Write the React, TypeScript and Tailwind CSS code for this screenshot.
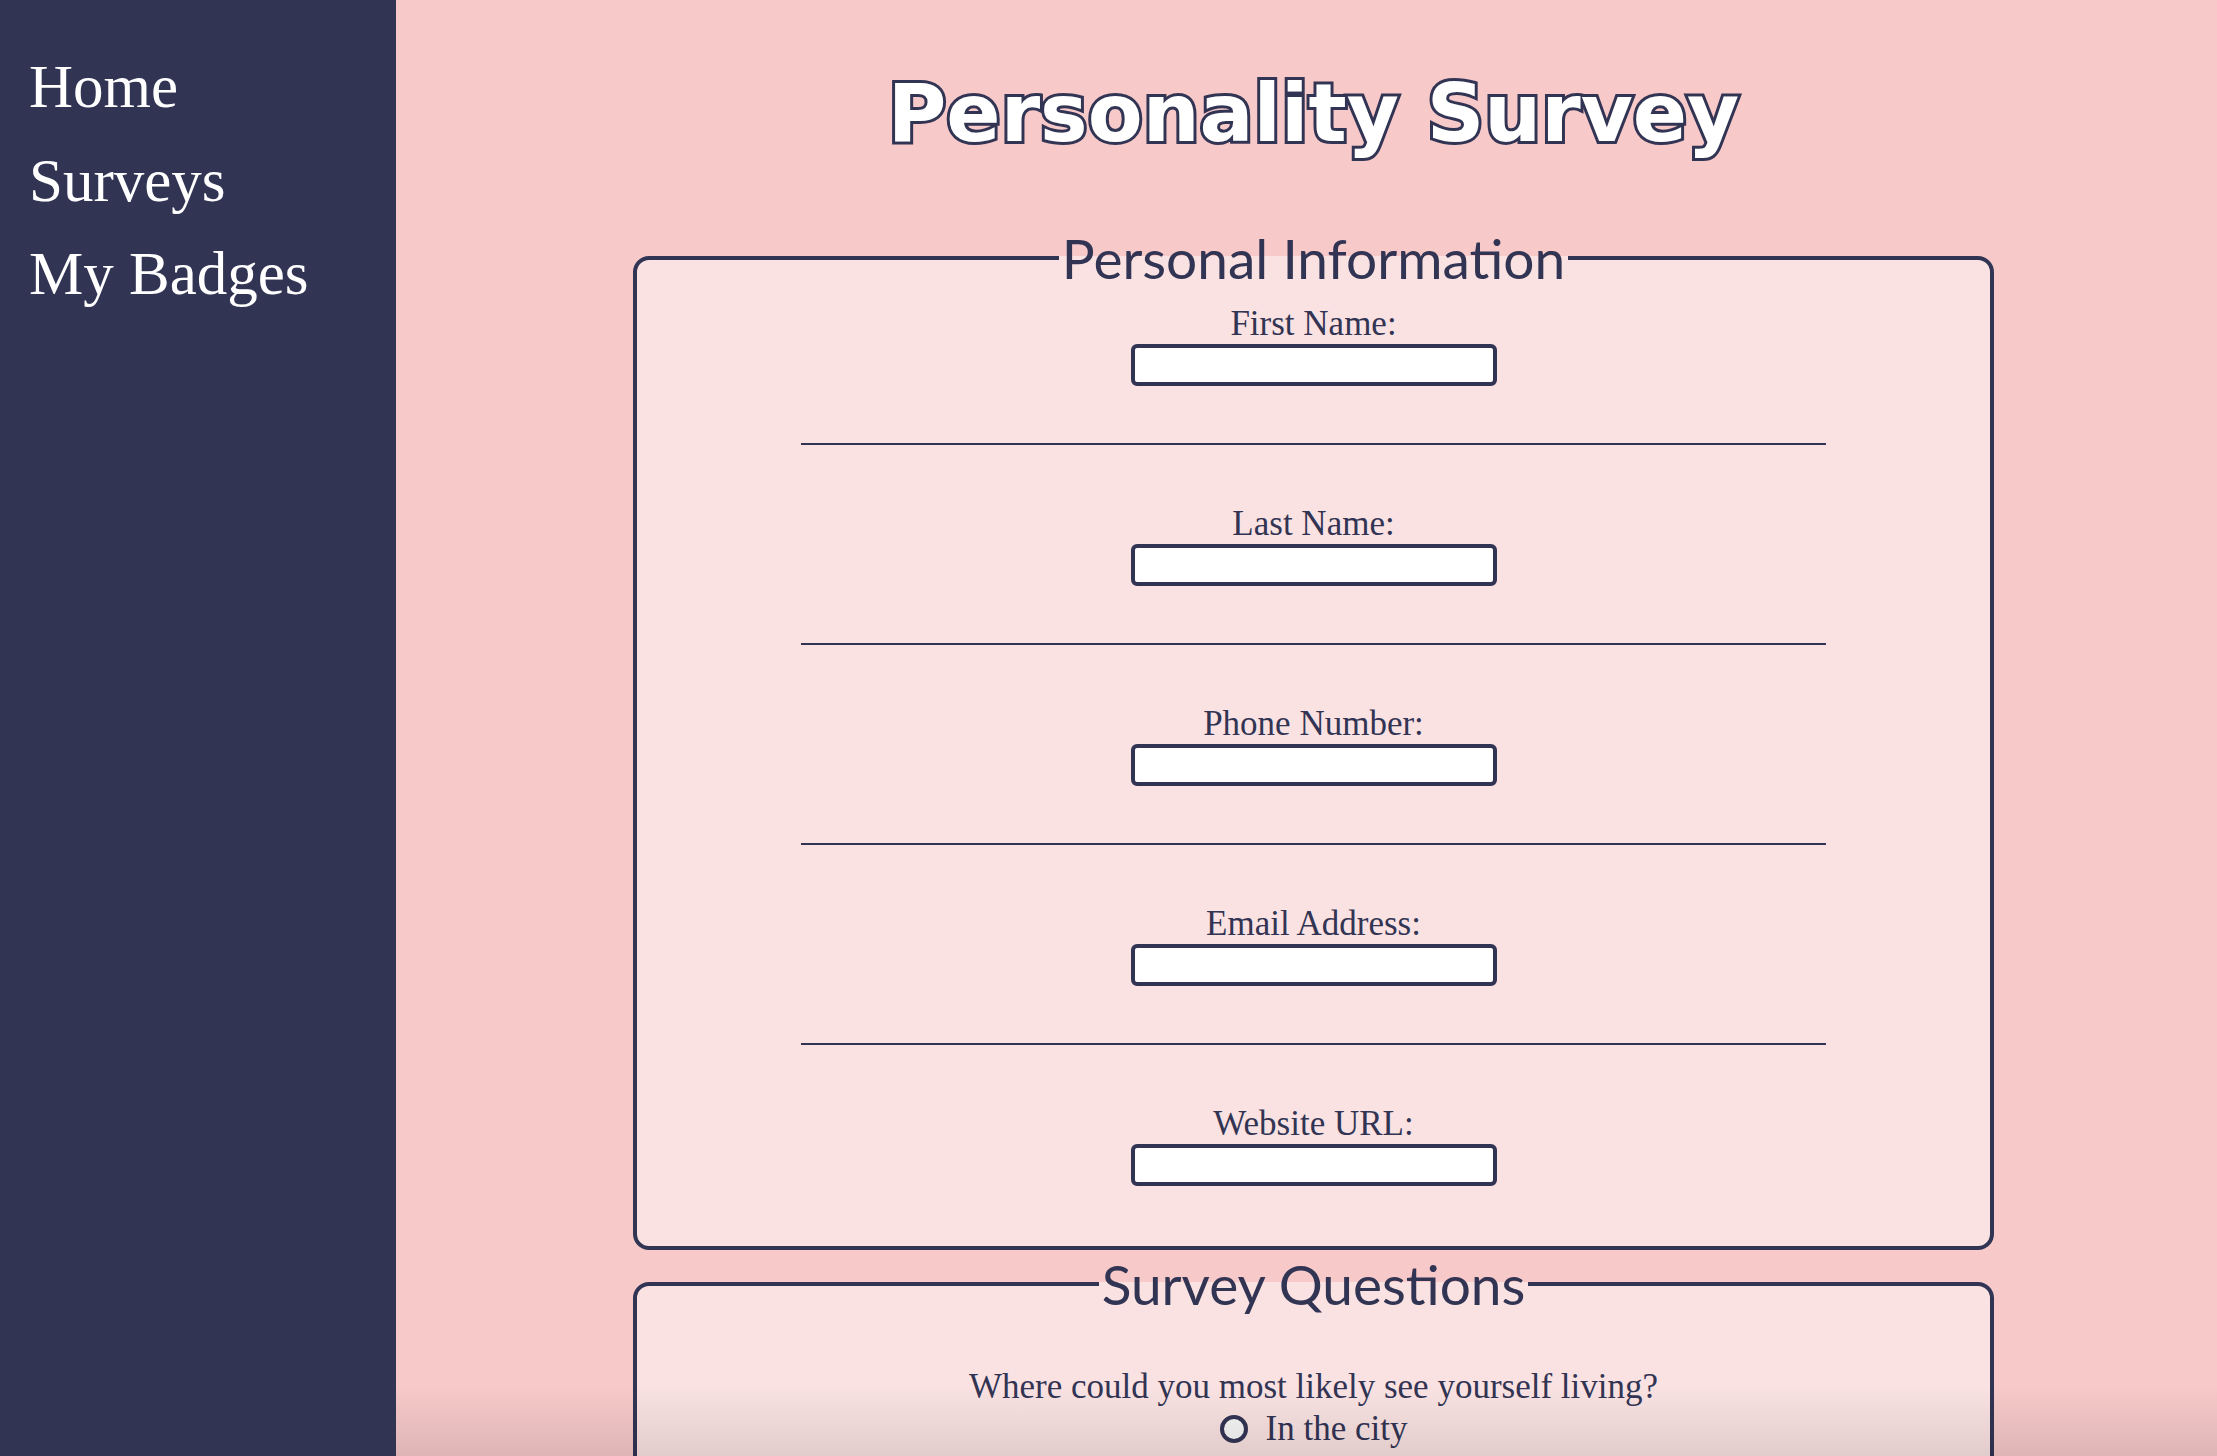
import React from "react";

const serif = "font-['Liberation_Serif','Times_New_Roman',serif]";

function Field({ label, last }: { label: string; last?: boolean }) {
  return (
    <div className="flex flex-col items-center">
      <label className={`${serif} block text-[35px] leading-[40px] text-[#323454]`}>{label}</label>
      <input
        type="text"
        className="block h-[42px] w-[366px] rounded-[6px] border-[4px] border-[#323454] bg-white outline-none"
      />
      {!last && <div className="mt-[57px] mb-[59px] h-[2px] w-[1025px] bg-[#323454]" />}
    </div>
  );
}

export default function App() {
  return (
    <div className="flex h-[1456px] w-full overflow-hidden bg-[#f7c9c9]">
      <nav className={`${serif} w-[396px] shrink-0 bg-[#323454] pl-[29px] pt-[40px] text-[61px] leading-[93.5px] text-white`}>
        <div>Home</div>
        <div>Surveys</div>
        <div>My Badges</div>
      </nav>
      <main className="relative flex flex-1 flex-col items-center pl-[14px] pt-[67px]">
        <h1 className="mb-[65px] font-['DejaVu_Sans',sans-serif] text-[80px] font-bold leading-[93px] text-white [-webkit-text-stroke:6px_#323454] [paint-order:stroke_fill]">
          Personality Survey
        </h1>
        <fieldset className="w-[1361px] rounded-[16px] border-[4px] border-[#323454] bg-[#fae2e2] pt-[13px] pb-[60px]">
          <legend className="mx-auto px-[3px] font-['Lato',sans-serif] text-[55px] leading-[66px] text-[#323454]">
            Personal Information
          </legend>
          <Field label="First Name:" />
          <Field label="Last Name:" />
          <Field label="Phone Number:" />
          <Field label="Email Address:" />
          <Field label="Website URL:" last />
        </fieldset>
        <fieldset className="mt-[1px] w-[1361px] rounded-[16px] border-[4px] border-[#323454] bg-[#fae2e2] pt-[49px] pb-[60px]">
          <legend className="mx-auto px-[3px] font-['Lato',sans-serif] text-[55px] leading-[66px] text-[#323454]">
            Survey Questions
          </legend>
          <div className={`${serif} flex flex-col items-center text-[35px] leading-[42px] text-[#323454]`}>
            <p>Where could you most likely see yourself living?</p>
            <label className="flex items-center gap-[18px]">
              <span className="block h-[28px] w-[28px] rounded-full border-[4px] border-[#323454] bg-[#f7f7f7]" />
              <span>In the city</span>
            </label>
            <label className="flex items-center gap-[18px]">
              <span className="block h-[28px] w-[28px] rounded-full border-[4px] border-[#323454] bg-[#f7f7f7]" />
              <span>In the suburbs</span>
            </label>
          </div>
        </fieldset>
        <div className="pointer-events-none absolute bottom-0 left-0 right-0 h-[70px] bg-gradient-to-b from-transparent to-black/10" />
      </main>
    </div>
  );
}
